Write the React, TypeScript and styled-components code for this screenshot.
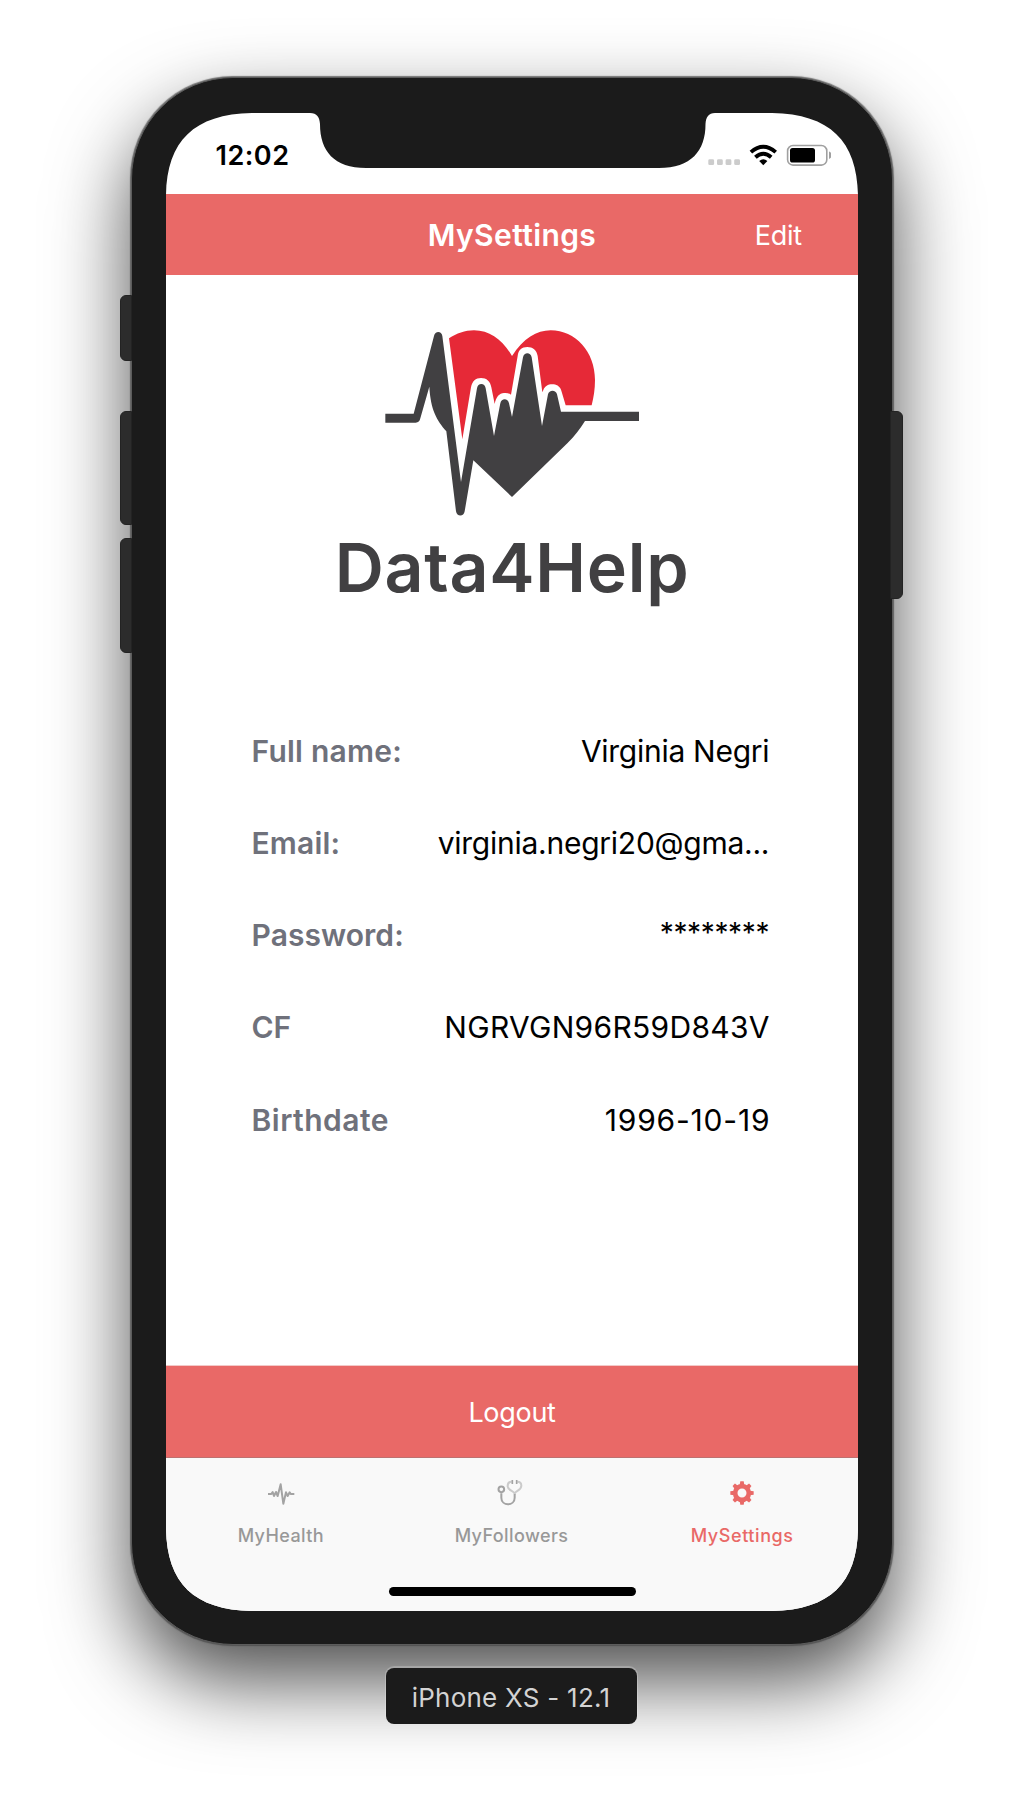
import React from 'react';
import styled, { createGlobalStyle } from 'styled-components';

const coral = '#e96967';
const screenShape =
  "path('M0 82 C1 28 28 1 86 0 H144 C151 0 153.500 4 154 11 C154 38 168 55 200 55 H493 C525 55 539.5 38 539.5 11 C540 4 542.5 0 549 0 H606 C664 1 691 28 692 82 V1416 C691 1470 664 1497 606 1498 H86 C28 1497 1 1470 0 1416 Z')";

const GlobalStyle = createGlobalStyle`
  *, *::before, *::after { box-sizing: border-box; }
  body {
    margin: 0;
    background: #fff;
    font-family: Inter, "Liberation Sans", sans-serif;
    overflow: hidden;
  }
`;

const Stage = styled.main`
  display: flex;
  flex-direction: column;
  align-items: center;
  width: 1024px;
  height: 1796px;
  padding-top: 77px;
  overflow: hidden;
`;

const Device = styled.div`
  display: flex;
  align-items: flex-start;
  width: 784px;
  height: 1568px;
`;

const Rail = styled.div<{ $side: 'left' | 'right' }>`
  display: flex;
  flex-direction: column;
  z-index: 1;
  width: ${(p) => (p.$side === 'left' ? 12 : 13)}px;
  margin-left: ${(p) => (p.$side === 'left' ? 0 : -3)}px;
  margin-right: ${(p) => (p.$side === 'left' ? -1 : 0)}px;
  padding-top: ${(p) => (p.$side === 'left' ? 218 : 334)}px;
`;

const HardKey = styled.span<{ $height: number; $gap?: number; $side: 'left' | 'right' }>`
  height: ${(p) => p.$height}px;
  margin-bottom: ${(p) => p.$gap ?? 0}px;
  background: #2c2c2c;
  border: 1px solid #232323;
  border-radius: ${(p) => (p.$side === 'left' ? '6px 0 0 6px' : '0 6px 6px 0')};
`;

const Body = styled.div`
  width: 762px;
  height: 1568px;
  padding: 35px 34px 33px;
  background: #1b1b1b;
  border: 1px solid #5c5c5c;
  border-radius: 102px;
  box-shadow: 0 0 1px 0.5px rgba(70, 70, 70, 0.7), 0 36px 80px rgba(0, 0, 0, 0.7);
`;

const Screen = styled.div`
  display: flex;
  flex-direction: column;
  width: 692px;
  height: 1498px;
  background: #fff;
  clip-path: ${screenShape};
`;

const StatusBar = styled.div`
  display: flex;
  justify-content: space-between;
  height: 81px;
  padding: 28px 27px 0 49.5px;
`;

const Clock = styled.time`
  font-size: 27px;
  font-weight: 600;
  line-height: 30px;
  letter-spacing: 0.5px;
`;

const NavBar = styled.header`
  display: grid;
  grid-template-columns: 1fr auto 1fr;
  align-items: center;
  height: 81px;
  padding: 0 55px;
  background: ${coral};
  color: #fff;
`;

const NavTitle = styled.h1`
  grid-column: 2;
  margin: 0;
  font-size: 30px;
  font-weight: 600;
  letter-spacing: 0.4px;
`;

const NavAction = styled.a`
  justify-self: end;
  padding: 1px 1px 0 0;
  font-size: 27px;
  letter-spacing: -0.2px;
`;

const Content = styled.section`
  display: flex;
  flex: 1;
  flex-direction: column;
  align-items: center;
  padding-top: 54px;
`;

const Brand = styled.div`
  height: 80px;
  margin-top: 10px;
  line-height: 80px;
  color: #414042;
  font-size: 68px;
  font-weight: 590;
  letter-spacing: 0.75px;
`;

const Fields = styled.dl`
  width: 517px;
  margin: 97.5px 0 0;
`;

const Field = styled.div`
  display: flex;
  align-items: center;
  justify-content: space-between;
  height: 92.25px;
  margin: 0 1px 0 -2px;
  font-size: 30px;
`;

const Label = styled.dt<{ $tracking: number }>`
  color: #6f717b;
  font-weight: 600;
  letter-spacing: ${(p) => p.$tracking}px;
`;

const Value = styled.dd<{ $tracking: number; $masked?: boolean }>`
  margin: 0 ${(p) => -p.$tracking}px 0 0;
  padding-bottom: ${(p) => (p.$masked ? 5 : 0)}px;
  color: #000;
  font-size: ${(p) => (p.$masked ? 28 : 30)}px;
  letter-spacing: ${(p) => p.$tracking}px;
`;

const LogoutButton = styled.button`
  height: 93px;
  border: 0;
  border-top: 1px solid #f3c9c8;
  background: ${coral};
  color: #fff;
  font-family: inherit;
  font-size: 27px;
  letter-spacing: -0.3px;
`;

const TabBar = styled.nav`
  display: grid;
  grid-template-columns: repeat(3, 1fr);
  grid-template-rows: 128.5px 1fr;
  height: 154px;
  margin-top: -1px;
  background: #f9f9f9;
  border-top: 1px solid #bd7170;
`;

const Tab = styled.a<{ $active?: boolean }>`
  display: flex;
  flex-direction: column;
  align-items: center;
  gap: 17px;
  padding: 20px 1px 0 0;
  color: ${(p) => (p.$active ? coral : '#989898')};
  font-size: 18px;
  font-weight: 500;
  letter-spacing: ${(p) => (p.$active ? 0.58 : 0.4)}px;
`;

const HomeIndicator = styled.span`
  grid-column: 1 / -1;
  justify-self: center;
  width: 247px;
  height: 9.5px;
  border-radius: 5px;
  background: #000;
`;

const Caption = styled.div`
  display: flex;
  align-items: center;
  justify-content: center;
  width: 251px;
  height: 56px;
  margin: 23px 2px 0 0;
  padding-top: 3px;
  z-index: 1;
  border-radius: 8px;
  background: #1b1b1b;
  color: #d3d3d3;
  font-size: 26px;
  letter-spacing: 0.25px;
  box-shadow: 0 -1px 0 1px rgba(255, 255, 255, 0.22);
`;

const StatusIcons = () => (
  <svg width="124" height="26" viewBox="707 141.3 124 26">
    {[708.3, 717, 725.6, 734.2].map((x) => (
      <rect key={x} x={x} y="159.6" width="5.8" height="5.8" rx="1.4" fill="#ccc" />
    ))}
    <g fill="none" stroke="#000" strokeWidth="3.9">
      <path d="M750.9 152.4 Q763.3 141.6 775.7 152.4" />
      <path d="M755.4 157.6 Q763.3 150.6 771.2 157.6" />
    </g>
    <path d="M759.2 161.4 Q763.3 157.6 767.4 161.4 L763.3 165.6 Z" />
    <rect x="787.6" y="145.8" width="39.2" height="19.6" rx="5.4" fill="none" stroke="#a0a0a0" strokeWidth="1.6" />
    <rect x="790" y="148.2" width="25" height="14.6" rx="2.6" />
    <path d="M829 151.8 C832.6 153 832.6 158 829 159.2 Z" fill="#a0a0a0" />
  </svg>
);

const Logo = () => (
  <svg width="254" height="188" viewBox="195 57 762 564">
    <path
      fill="#e62937"
      d="M387 85 C410 70 435 61 462 61 C510 61 548 90 576 138 C610 85 650 61 692 61 C766 61 825 125 825 210 C825 238 821 262 815 286 H737 L724 242 C719 227 708 223 697 223 C683 223 675 229 670 240 L667 247 L653 138 C650 120 638 111 622 111 C605 111 595 120 593 138 L573 254 C568 250 560 248 552 249 C538 250 528 260 524 282 L514 232 C511 214 500 204 483 204 C467 204 457 213 453 232 L427 388 Z"
    />
    <path
      fill="#414042"
      d="M196 311 H281 L342 78 C345 62 365 62 367 78 L423 516 L471 235 C473 218 495 218 497 235 L522 378 L541 280 C544 264 564 264 567 280 L576 321 L609 142 C612 126 632 126 635 142 L666 348 L684 253 C687 239 708 239 711 253 L723 305 H957 V333 H795 C780 356 765 378 742 400 L576 561 L460 451 L434 604 C432 621 410 621 408 604 L379 364 C350 330 332 300 328 230 L301 325 C299 334 295 338 287 338 H196 Z"
    />
  </svg>
);

const PulseIcon = () => (
  <svg width="28" height="30" viewBox="440 413 84 90" fill="none" stroke="#a3a3a3" strokeWidth="6" strokeLinejoin="round">
    <path d="M443 461 H453 L457 455 L461 467 L467 455 L472 467 L481 432 L489 490 L497 456 L502 467 L508 456 L511 461 H522" />
  </svg>
);

const StethoscopeIcon = () => (
  <svg width="28" height="30" viewBox="1136 413 84 90" fill="none" strokeWidth="6">
    <path stroke="#cbcbcb" d="M1180 424 C1172 424 1168 430 1168 438 C1169 451 1184 450 1189 460 C1193 450 1209 450 1209 436 C1209 428 1204 424 1197 424" />
    <g stroke="#a3a3a3">
      <circle cx="1149" cy="447" r="8.5" />
      <path d="M1149 459 V472 C1149 498 1189 498 1189 472 V461" />
      <path d="M1182 419 V431 M1195 419 V431" strokeWidth="5" />
    </g>
  </svg>
);

const GearIcon = () => (
  <svg width="28" height="30" viewBox="684 413 84 90">
    <circle cx="726" cy="458" r="20.5" fill="none" stroke={coral} strokeWidth="14" />
    {[0, 45, 90, 135, 180, 225, 270, 315].map((a) => (
      <path key={a} d="M719 434 L721 423 H731 L733 434 Z" fill={coral} transform={`rotate(${a} 726 458)`} />
    ))}
  </svg>
);

const fields = [
  { label: 'Full name:', labelTracking: 0.25, value: 'Virginia Negri', valueTracking: -0.28 },
  { label: 'Email:', labelTracking: 0.2, value: 'virginia.negri20@gma...', valueTracking: -0.25 },
  { label: 'Password:', labelTracking: 0.05, value: '********', valueTracking: -0.35, masked: true },
  { label: 'CF', labelTracking: 0, value: 'NGRVGN96R59D843V', valueTracking: 0.3 },
  { label: 'Birthdate', labelTracking: 0.5, value: '1996-10-19', valueTracking: 0.8 },
];

export default function App() {
  return (
    <>
      <GlobalStyle />
      <Stage>
        <Device>
          <Rail $side="left">
            <HardKey $side="left" $height={66} $gap={50} />
            <HardKey $side="left" $height={114} $gap={13} />
            <HardKey $side="left" $height={115} />
          </Rail>
          <Body>
            <Screen>
              <StatusBar>
                <Clock>12:02</Clock>
                <StatusIcons />
              </StatusBar>
              <NavBar>
                <NavTitle>MySettings</NavTitle>
                <NavAction>Edit</NavAction>
              </NavBar>
              <Content>
                <Logo />
                <Brand>Data4Help</Brand>
                <Fields>
                  {fields.map((f) => (
                    <Field key={f.label}>
                      <Label $tracking={f.labelTracking}>{f.label}</Label>
                      <Value $tracking={f.valueTracking} $masked={f.masked}>
                        {f.value}
                      </Value>
                    </Field>
                  ))}
                </Fields>
              </Content>
              <LogoutButton>Logout</LogoutButton>
              <TabBar>
                <Tab>
                  <PulseIcon />
                  <span>MyHealth</span>
                </Tab>
                <Tab>
                  <StethoscopeIcon />
                  <span>MyFollowers</span>
                </Tab>
                <Tab $active>
                  <GearIcon />
                  <span>MySettings</span>
                </Tab>
                <HomeIndicator />
              </TabBar>
            </Screen>
          </Body>
          <Rail $side="right">
            <HardKey $side="right" $height={188} />
          </Rail>
        </Device>
        <Caption>iPhone XS - 12.1</Caption>
      </Stage>
    </>
  );
}
